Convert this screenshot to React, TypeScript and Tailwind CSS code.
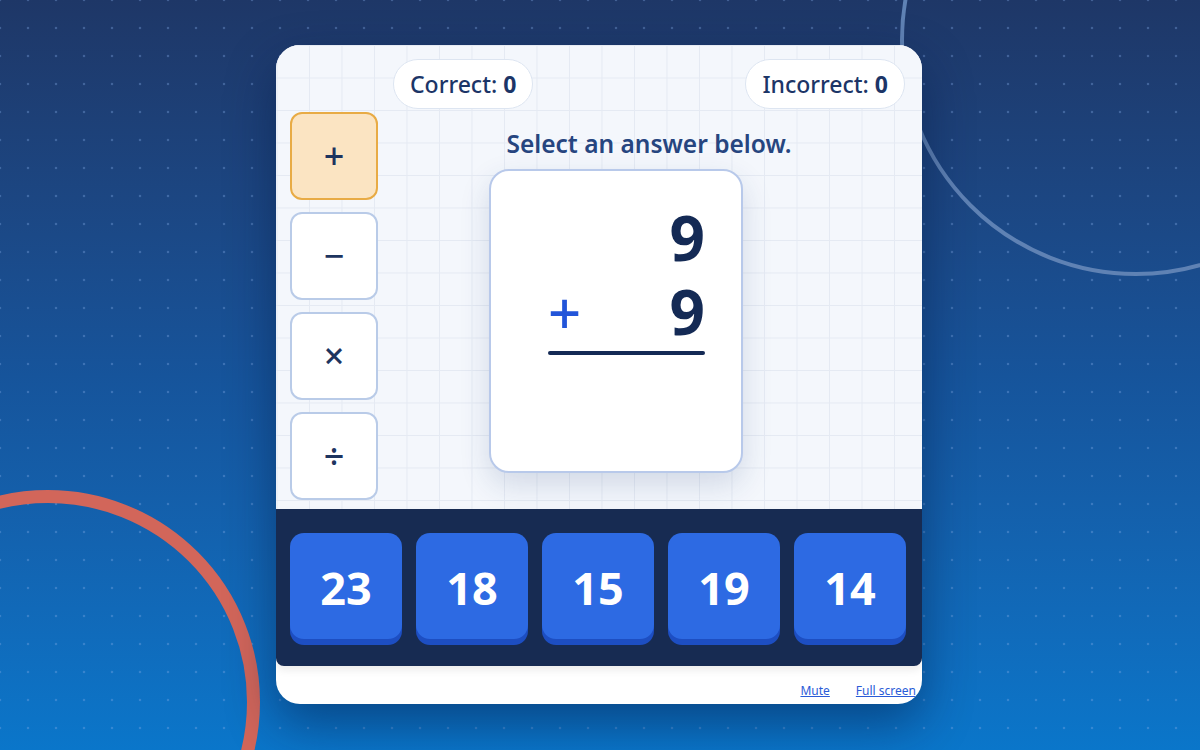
const ops = ['+', '−', '×', '÷']
const answers = [23, 18, 15, 19, 14]

export default function App() {
  return (
    <div
      className="relative flex h-[750px] w-[1200px] items-start justify-center overflow-hidden bg-gradient-to-b from-[#1e3767] via-[#16549b] to-[#0a76ca] pt-[45px]"
      style={{ fontFamily: '"Noto Sans", "Open Sans", sans-serif' }}
    >
      {/* dotted backdrop */}
      <div className="absolute inset-0 bg-[radial-gradient(circle,rgba(130,170,230,0.35)_1.4px,transparent_1.6px)] bg-[length:28px_28px] bg-[position:14px_14px]" />

      {/* decorative rings */}
      <div className="absolute left-[900px] top-[-196px] h-[472px] w-[472px] rounded-full border-[4px] border-[#5f82b4]" />
      <div className="absolute left-[-164px] top-[490px] h-[424px] w-[424px] rounded-full border-[13px] border-[#d2665a]" />

      {/* GAME CARD */}
      <div className="relative z-10 mr-[2px] flex h-[659px] w-[646px] flex-col overflow-hidden rounded-[24px] bg-white shadow-[0_20px_50px_rgba(0,20,60,0.45)]">
        {/* play area */}
        <div className="flex h-[464px] bg-[#f4f7fc] bg-[linear-gradient(to_right,#e5eaf3_1px,transparent_1px),linear-gradient(to_bottom,#e5eaf3_1px,transparent_1px)] bg-[length:32.5px_32.5px] bg-[position:0.5px_0px] pl-[14px]">
          {/* operators */}
          <div className="flex w-[88px] flex-col gap-[12px] pt-[67px]">
            {ops.map((op, i) => (
              <div
                key={op}
                className={`flex h-[88px] items-center justify-center rounded-[12px] border-2 text-[36px] font-medium text-[#1d345f] ${
                  i === 0
                    ? 'border-[#e8ab45] bg-[#fbe4c2]'
                    : 'border-[#b9cbe8] bg-white'
                }`}
              >
                {op}
              </div>
            ))}
          </div>

          <div className="flex flex-1 flex-col pl-[15px] pr-[17px] pt-[14px]">
            {/* scores */}
            <div className="flex justify-between">
              <div className="flex h-[50px] items-center rounded-full border border-[#dde5f1] bg-white px-[16px] text-[23px] font-medium text-[#1c3567]">
                Correct:&nbsp;<span className="font-bold">0</span>
              </div>
              <div className="flex h-[50px] items-center rounded-full border border-[#dde5f1] bg-white px-[16px] text-[23px] font-medium text-[#1c3567]">
                Incorrect:&nbsp;<span className="font-bold">0</span>
              </div>
            </div>

            <p className="mt-[19px] text-center text-[24.5px] font-semibold leading-[32px] text-[#26457f]">
              Select an answer below.
            </p>

            {/* problem */}
            <div className="ml-[96px] mt-[9px] h-[304px] w-[254px] rounded-[20px] border-2 border-[#b8c9ea] bg-white pl-[57px] pr-[36px] pt-[30px] shadow-[0_12px_30px_rgba(30,60,120,0.16)]">
              <div className="h-[74px] pt-[5px] text-right text-[62px] font-bold leading-none text-[#142a55]">9</div>
              <div className="flex h-[74px] items-start justify-between pt-[5px]">
                <span className="mt-[3px] text-[58px] font-medium leading-none text-[#2255d9]">+</span>
                <span className="text-[62px] font-bold leading-none text-[#142a55]">9</span>
              </div>
              <div className="mt-[2px] h-[4px] rounded-full bg-[#142a55]" />
            </div>
          </div>
        </div>

        {/* answers */}
        <div className="flex h-[157px] gap-[14px] rounded-b-[8px] bg-[#172b52] px-[14px] pt-[24px] shadow-[0_4px_8px_rgba(0,0,0,0.08)]">
          {answers.map((n) => (
            <button
              key={n}
              className="flex h-[106px] w-[112px] items-center justify-center rounded-[14px] bg-[#2d6ae3] pt-[4px] text-[45px] font-bold text-white shadow-[0_6px_0_#1d4ec2]"
            >
              {n}
            </button>
          ))}
        </div>

        {/* footer links */}
        <div className="flex flex-1 items-center justify-end gap-[26px] pr-[6px] pt-[12px] text-[12px] text-[#2a5bd7]">
          <a className="underline">Mute</a>
          <a className="whitespace-nowrap underline">Full screen</a>
        </div>
      </div>
    </div>
  )
}
